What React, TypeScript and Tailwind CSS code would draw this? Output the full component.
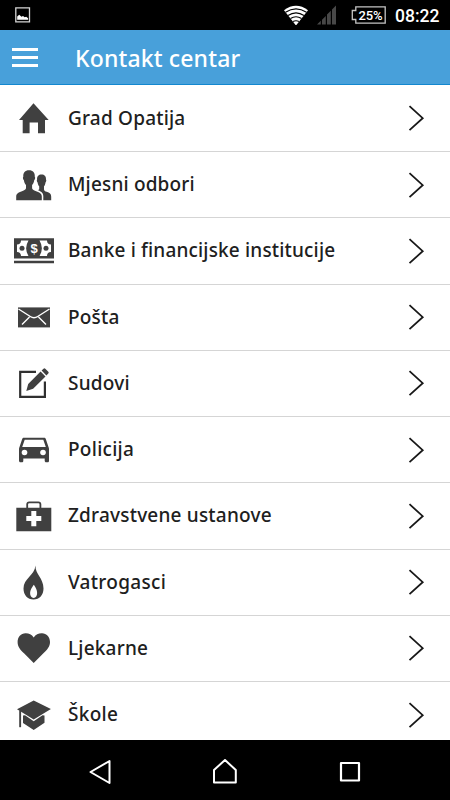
import React from 'react';

const contacts = [
  {
    title: 'Grad Opatija',
    tracking: 'tracking-[0.2px]',
    icon: <path d="M21.5 5.3 36.7 22H33v13.2h-7V24.6h-8.4v10.6H10.7V22H7z" />,
  },
  {
    title: 'Mjesni odbori',
    tracking: 'tracking-[0.17px]',
    icon: (
      <>
        <path d="M17 5.3c-4 0-6 2.4-5.7 6.5-.8.8-.2 2.8.6 3.5.4 2.5 1.2 3.7 2.1 4.7v3.2c-.3 1.6-2 2.1-4.7 3.2C5.5 28 4.2 28.800 4.200 31.500v3.700h25.600v-3.700c0-2.700-1.300-3.500-5-5.100-2.700-1.100-4.400-1.600-4.700-3.200V20c.9-1 1.700-2.200 2.100-4.700.8-.7 1.400-2.700.6-3.500.3-4.100-1.800-6.500-5.800-6.500z" />
        <path d="M29.500 9.600c-3 0-4.700 2-4.400 5-.6.8-.2 2.300.5 2.800.3 2 .8 3 1.600 3.800v3.100l-1.200 1c3.900 1.500 5.300 3 5.300 6v3.900h7.900v-3.400c0-3-1.600-3.800-4.500-5-1.600-.7-2.600-1.100-2.700-2.400v-3.200c.8-.8 1.200-1.800 1.500-3.800.7-.5 1.100-2 .5-2.800.3-3-1.500-5-4.500-5z" />
      </>
    ),
  },
  {
    title: 'Banke i financijske institucije',
    tracking: 'tracking-[0.17px]',
    icon: (
      <>
        <path d="M2 7.2h40v20.3H2zM2 29.8h40v2.5H2z" />
        <path d="M9 9.5h7.5a15 15 0 0 0 0 15.6H9c0-2.5-1.5-4-4-4v-7.6c2.5 0 4-1.5 4-4zM35 9.5h-7.5a15 15 0 0 1 0 15.6H35c0-2.5 1.5-4 4-4v-7.6c-2.5 0-4-1.5-4-4z" fill="#fff" />
        <circle cx="10" cy="17.3" r="2.5" />
        <circle cx="34" cy="17.3" r="2.5" />
        <text x="22" y="22" textAnchor="middle" fill="#fff" className="font-['Liberation_Sans'] text-[13px] font-bold">$</text>
      </>
    ),
  },
  {
    title: 'Pošta',
    tracking: 'tracking-[0.2px]',
    icon: (
      <>
        <path d="M6 10.4h32v20H6z" />
        <path d="m6.5 12 11.8 7.5c2.6 1.7 4.8 1.7 7.4 0L37.5 12M10 27.5l7.5-7.5M34 27.5 26.5 20" fill="none" stroke="#fff" strokeWidth="1.4" />
      </>
    ),
  },
  {
    title: 'Sudovi',
    tracking: 'tracking-[0.2px]',
    icon: (
      <>
        <path d="M24 8.9H8.2v24.900h24.700V18.500" fill="none" stroke="#303030" strokeWidth="2.2" />
        <path d="m14.300 27.900 1.900-7L28.600 8.500l4.900 4.900-12.400 12.400zM29.600 7.500l1.900-1.800q.9-.9 1.800 0l3 3q.9.9 0 1.800l-1.900 1.900z" />
      </>
    ),
  },
  {
    title: 'Policija',
    tracking: 'tracking-[0.28px]',
    icon: (
      <>
        <path fillRule="evenodd" d="M12 7.700h20c1 0 1.500.4 1.800 1.300l2.700 8c.3.7.5 1.200.5 2v11.700c0 1-.6 1.500-1.500 1.500h-1.300c-1 0-1.500-.6-1.500-1.500v-2.300H11.300v2.300c0 1-.6 1.500-1.500 1.500H8.500c-.9 0-1.500-.6-1.500-1.500V19c0-.8.2-1.300.5-2l2.700-8c.3-.9.8-1.300 1.800-1.300zM12.700 9.700 10.200 17h23.600l-2.500-7.300z" />
        <circle cx="12.5" cy="22.5" r="2.8" fill="#fff" />
        <circle cx="31" cy="22.5" r="2.8" fill="#fff" />
      </>
    ),
  },
  {
    title: 'Zdravstvene ustanove',
    tracking: 'tracking-[0.2px]',
    icon: (
      <>
        <path d="M4.3 11.7h35v23.5h-35z" />
        <path d="M15.2 12V8.3q0-2 2-2h9.200q2 0 2 2V12" fill="none" stroke="#404040" strokeWidth="1.8" />
        <path d="M19.3 15h5v5.100h5v5h-5v5.200h-5v-5.200h-5v-5h5z" fill="#fff" />
      </>
    ),
  },
  {
    title: 'Vatrogasci',
    tracking: 'tracking-[0.3px]',
    icon: (
      <>
        <path d="M23.5 3.5c-.5 8.5 8 12.5 8 23 0 6.5-4 11-10 11s-10-4.500-10-11c0-10 11-13 12-23z" />
        <path d="M21.8 22.8c2.2 3.2 3.3 5.5 3.300 8.200s-1.300 5-3.500 5-3.500-2.300-3.500-5 1.500-5 3.700-8.200z" fill="#fff" />
      </>
    ),
  },
  {
    title: 'Ljekarne',
    tracking: 'tracking-[0.2px]',
    icon: <path d="M21.7 9.4c-2-3-5-4.200-8.200-4.100C9 5.500 5.600 9 5.600 14c0 4.500 2.700 7.900 6.400 11.300l9.700 9.800 9.700-9.800c3.700-3.400 6.600-6.800 6.600-11.300 0-5-3.500-8.500-8-8.700-3.300-.1-6.300 1.100-8.300 4.100z" />,
  },
  {
    title: 'Škole',
    tracking: 'tracking-[0.3px]',
    icon: (
      <>
        <path d="M21.7 5.4 38.9 14 21.7 24.5 5 14.3zM11 20.600l2-.3 8.700 6 8.800-6 2 .3v7.200L21.700 35 11 28z" />
        <path d="M7.2 15.5h1.900v16.700H7.200z" />
      </>
    ),
  },
];

function StatusBar() {
  return (
    <div className="flex h-[30px] shrink-0 items-center bg-black text-white">
      <svg viewBox="0 0 16 16" className="ml-[15px] h-4 w-4">
        <path d="M.8.8h13.700v14H.8z" fill="none" stroke="#d6d6d6" strokeWidth="1.3" />
        <path d="M2.200 12.800V9.500l2-1.700 2.300 1.900 1.500-.8 1.700 1.400 1.500-.5 1.900 1.400v1.600z" fill="#fff" />
      </svg>
      <svg viewBox="0 0 24 20" className="ml-[253px] h-5 w-6">
        <path d="M0 5.200Q12-3.500 24 5.200L12 20.500z" fill="#fff" />
        <path d="M1.500 7.300q10.500-6.900 21 0M4 10.500q8-5.300 16 0M6.500 13.500q5.500-3.400 11 0M9 16.500q3-1.600 6 0" fill="none" stroke="#000" strokeWidth="1.1" />
      </svg>
      <svg viewBox="0 0 20 20" className="ml-[9px] h-5 w-5">
        <path d="M0 19.500 3.800 15.700v3.800zM5 14.700l3.800-3.800v8.600H5zM10 9.600l3.800-3.800v13.700H10zM15 4.500 19 .5v19h-4z" fill="#484848" />
      </svg>
      <svg viewBox="0 0 36 20" className="ml-[14px] h-5 w-9">
        <path d="M4.800 1.800h29.400v16.400H4.800v-3.700H1.300v-9h3.500z" fill="none" stroke="#c5c5c5" strokeWidth="1.3" />
        <text x="19.5" y="14.6" textAnchor="middle" textLength="24" fill="#fff" className="font-[Roboto,sans-serif] text-[13px] font-medium">25%</text>
      </svg>
      <span className="mt-[3px] ml-2 font-[Roboto,sans-serif] text-[17.5px] leading-none font-medium">08:22</span>
    </div>
  );
}

function NavBar() {
  return (
    <nav className="flex h-[60px] shrink-0 items-center justify-between bg-black px-[87px]">
      <svg viewBox="0 0 26 26" className="mt-1 h-[26px] w-[26px]" fill="none" stroke="#fff" strokeWidth="2" strokeLinejoin="round">
        <path d="M3.5 13 22.500 2v22z" />
      </svg>
      <svg viewBox="0 0 26 26" className="mt-1 h-[26px] w-[26px]" fill="none" stroke="#fff" strokeWidth="2" strokeLinejoin="round">
        <path d="m13 1 10.800 10v12.500H2V11z" />
      </svg>
      <svg viewBox="0 0 26 26" className="mt-1 h-[26px] w-[26px]" fill="none" stroke="#fff" strokeWidth="2.2" strokeLinejoin="round">
        <path d="M4 4h18v17.500H4z" />
      </svg>
    </nav>
  );
}

export default function App() {
  return (
    <div className="flex h-[800px] w-[450px] flex-col overflow-hidden bg-white font-['Noto_Sans','Open_Sans',sans-serif]">
      <StatusBar />
      <header className="flex h-[55px] shrink-0 items-center border-b border-[#1287cf] bg-[#48a0da] text-white">
        <button aria-label="Menu" className="mt-px ml-3 flex w-[26px] flex-col gap-[5.5px]">
          <span className="h-[2.5px] bg-white" />
          <span className="h-[2.5px] bg-white" />
          <span className="h-[2.5px] bg-white" />
        </button>
        <h1 className="mt-0.5 ml-[37px] text-[23px] leading-none font-medium tracking-[0.15px] whitespace-nowrap">Kontakt centar</h1>
      </header>
      <ul className="min-h-0 flex-1 overflow-hidden pt-[0.75px]">
        {contacts.map((item) => (
          <li key={item.title} className="flex h-[66.25px] items-center border-b border-[#d5d5d5] text-[#202020]">
            <svg viewBox="0 0 44 40" className="ml-3 h-10 w-11 shrink-0" fill="#404040">
              {item.icon}
            </svg>
            <span className={`ml-3 flex-1 text-[19px] leading-none font-medium whitespace-nowrap ${item.tracking}`}>{item.title}</span>
            <svg viewBox="0 0 18 28" className="mr-[25px] h-7 w-[18px] shrink-0" fill="none" stroke="#181818" strokeWidth="1.8">
              <path d="M2.5 2.2 15.700 14.200 2.500 26.200" />
            </svg>
          </li>
        ))}
      </ul>
      <NavBar />
    </div>
  );
}
